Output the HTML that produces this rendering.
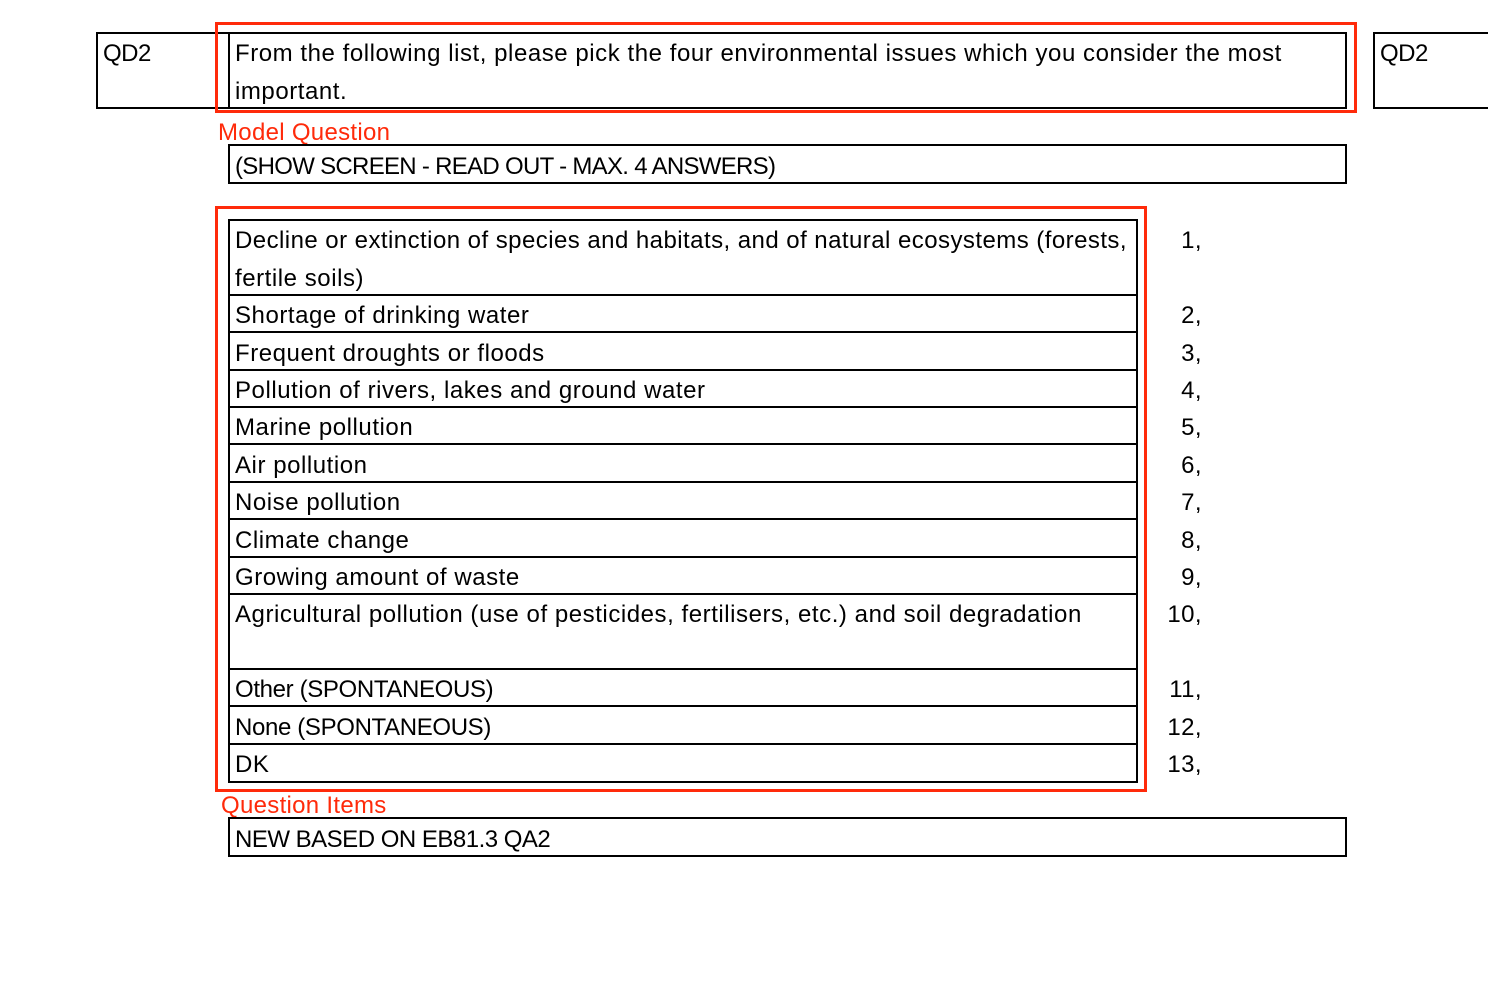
<!DOCTYPE html>
<html><head><meta charset="utf-8"><style>
body{margin:0;width:1488px;height:992px;background:#fff;position:relative;overflow:hidden;font-family:"Liberation Sans",Arial,sans-serif;color:#000}
.b{position:absolute;border:2px solid #000;box-sizing:border-box}
.r{position:absolute;border:3px solid #ff2a0a;box-sizing:border-box}
.t{position:absolute;font-size:24px;line-height:26px;white-space:nowrap;letter-spacing:0.55px;margin-top:1px}
.l{position:absolute;font-size:24px;line-height:26px;color:#ff2a0a;white-space:nowrap;letter-spacing:0.3px;margin-top:1px}
.n{position:absolute;font-size:24px;line-height:26px;width:60px;text-align:right;left:1142px;letter-spacing:0.4px;margin-top:1px}
.h{position:absolute;left:228px;width:909px;height:2px;background:#000}
</style></head><body>
<div class="b" style="left:96px;top:32px;width:134px;height:77px"></div>
<div class="b" style="left:228px;top:32px;width:1119px;height:77px"></div>
<div class="b" style="left:1373px;top:32px;width:130px;height:77px"></div>
<div class="r" style="left:215px;top:22px;width:1142px;height:91px"></div>
<div class="t" style="left:103px;top:40px;letter-spacing:-0.5px">QD2</div>
<div class="t" style="left:1380px;top:40px;letter-spacing:-0.5px">QD2</div>
<div class="t" style="left:235px;top:40px">From the following list, please pick the four environmental issues which you consider the most</div>
<div class="t" style="left:235px;top:78px">important.</div>
<div class="l" style="left:218px;top:119px">Model Question</div>
<div class="b" style="left:228px;top:144px;width:1119px;height:40px"></div>
<div class="t" style="left:235px;top:153px;letter-spacing:-0.7px">(SHOW SCREEN - READ OUT - MAX. 4 ANSWERS)</div>

<div class="r" style="left:215px;top:206px;width:932px;height:586px"></div>
<div class="b" style="left:228px;top:219px;width:910px;height:564px"></div>
<div class="h" style="top:294px"></div>
<div class="h" style="top:331px"></div>
<div class="h" style="top:369px"></div>
<div class="h" style="top:406px"></div>
<div class="h" style="top:443px"></div>
<div class="h" style="top:481px"></div>
<div class="h" style="top:518px"></div>
<div class="h" style="top:556px"></div>
<div class="h" style="top:593px"></div>
<div class="h" style="top:668px"></div>
<div class="h" style="top:705px"></div>
<div class="h" style="top:743px"></div>

<div class="t" style="left:235px;top:227px;letter-spacing:0.45px">Decline or extinction of species and habitats, and of natural ecosystems (forests,</div>
<div class="t" style="left:235px;top:265px">fertile soils)</div>
<div class="t" style="left:235px;top:302px">Shortage of drinking water</div>
<div class="t" style="left:235px;top:340px">Frequent droughts or floods</div>
<div class="t" style="left:235px;top:377px">Pollution of rivers, lakes and ground water</div>
<div class="t" style="left:235px;top:414px">Marine pollution</div>
<div class="t" style="left:235px;top:452px">Air pollution</div>
<div class="t" style="left:235px;top:489px">Noise pollution</div>
<div class="t" style="left:235px;top:527px">Climate change</div>
<div class="t" style="left:235px;top:564px">Growing amount of waste</div>
<div class="t" style="left:235px;top:601px">Agricultural pollution (use of pesticides, fertilisers, etc.) and soil degradation</div>
<div class="t" style="left:235px;top:676px;letter-spacing:-0.35px">Other (SPONTANEOUS)</div>
<div class="t" style="left:235px;top:714px;letter-spacing:-0.35px">None (SPONTANEOUS)</div>
<div class="t" style="left:235px;top:751px">DK</div>

<div class="n" style="top:227px">1,</div>
<div class="n" style="top:302px">2,</div>
<div class="n" style="top:340px">3,</div>
<div class="n" style="top:377px">4,</div>
<div class="n" style="top:414px">5,</div>
<div class="n" style="top:452px">6,</div>
<div class="n" style="top:489px">7,</div>
<div class="n" style="top:527px">8,</div>
<div class="n" style="top:564px">9,</div>
<div class="n" style="top:601px">10,</div>
<div class="n" style="top:676px">11,</div>
<div class="n" style="top:714px">12,</div>
<div class="n" style="top:751px">13,</div>

<div class="l" style="left:221px;top:792px">Question Items</div>
<div class="b" style="left:228px;top:817px;width:1119px;height:40px"></div>
<div class="t" style="left:235px;top:826px;letter-spacing:-0.5px">NEW BASED ON EB81.3 QA2</div>
</body></html>
